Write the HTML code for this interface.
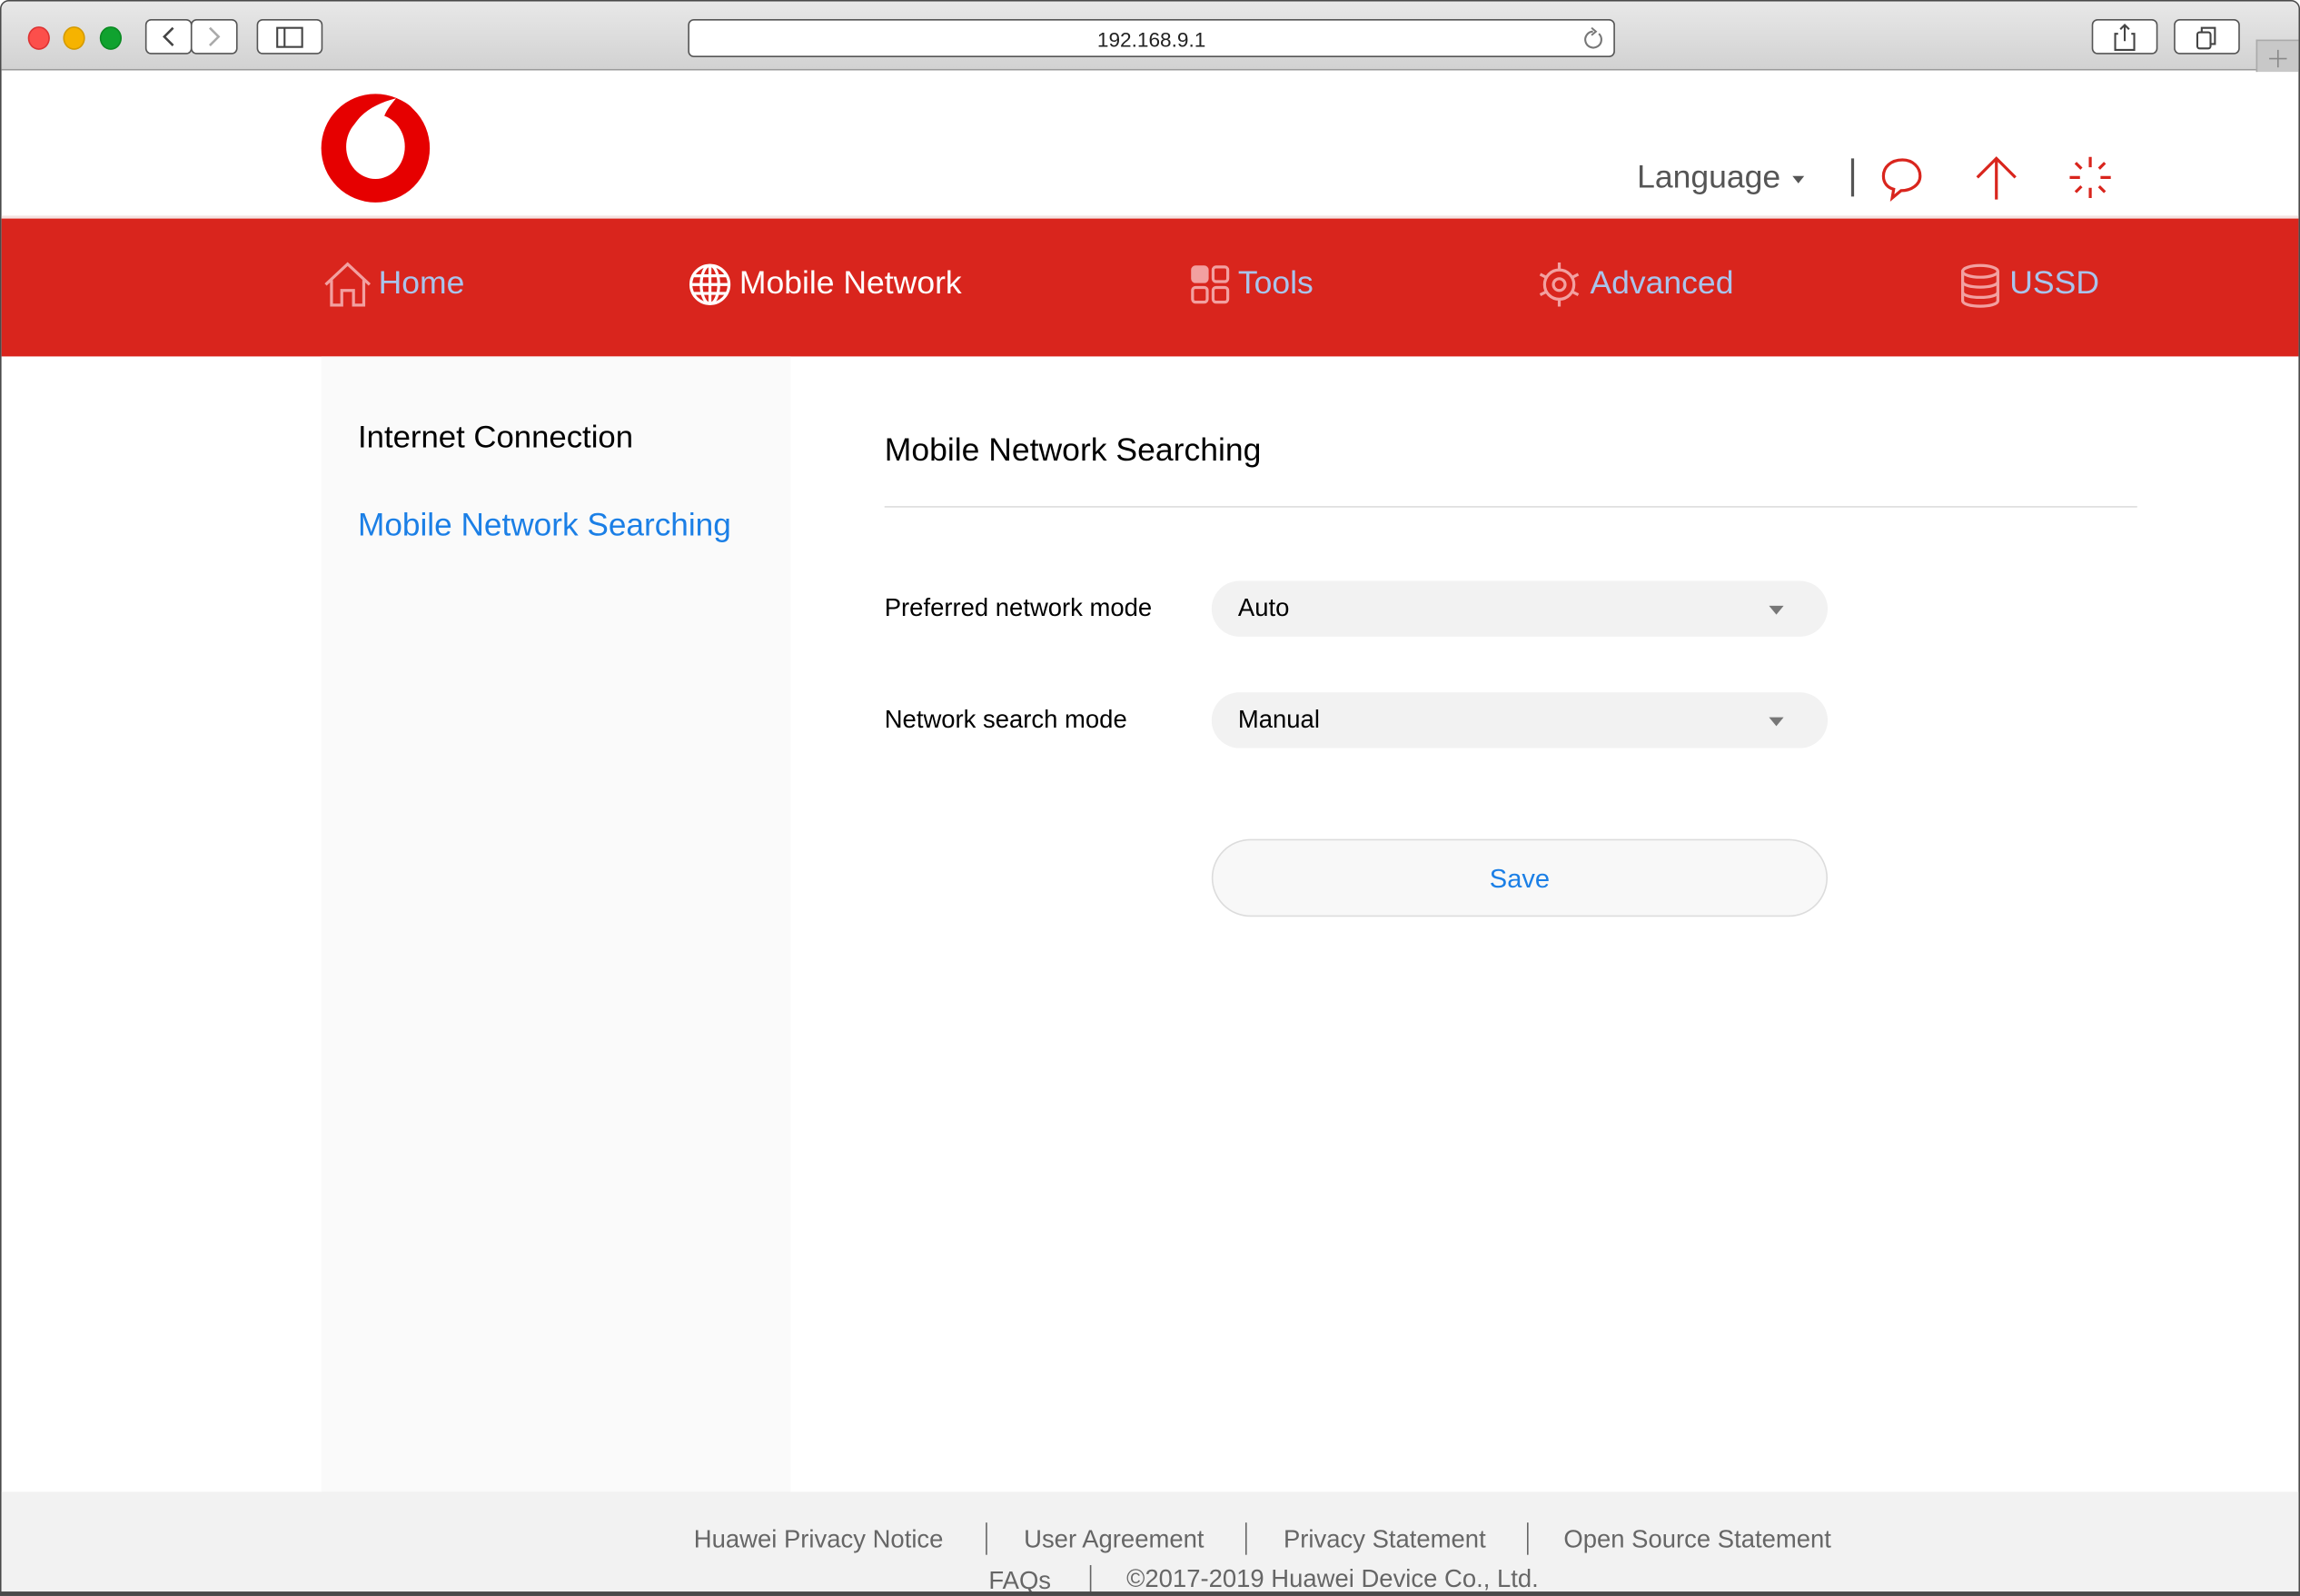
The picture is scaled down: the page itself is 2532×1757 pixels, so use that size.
<!DOCTYPE html>
<html><head><meta charset="utf-8">
<style>
html,body{margin:0;padding:0;width:2532px;height:1756px;overflow:hidden;background:#fff;}
#s{position:absolute;left:0;top:0;width:1568px;height:1088px;transform:scale(1.6148);transform-origin:0 0;font-family:"Liberation Sans",Arial,sans-serif;}
.a{position:absolute;}
.win{left:0;top:0;width:1566px;height:1086px;border:1px solid #4a4a4a;border-radius:6px 6px 0 0;overflow:hidden;background:#fff;}
.tb{left:0;top:0;width:1568px;height:46px;background:linear-gradient(#e8e8e8,#d2d2d2);border-bottom:1px solid #9a9a9a;}
.dot{width:13px;height:14px;border-radius:50%;top:17px;}
.btn{top:12px;height:24px;background:#fff;border:1px solid #555;border-radius:4px;box-sizing:border-box;}
.nav{color:#a9c4ec;font-size:22px;top:179px;}
.lbl{font-size:17px;color:#000;}
.sel{left:825px;width:420px;height:38px;border-radius:19px;background:#f2f2f2;}
.sel span{position:absolute;left:18px;top:9px;font-size:17px;color:#000;}
.sel i{position:absolute;left:380px;top:17px;width:0;height:0;border-left:5px solid transparent;border-right:5px solid transparent;border-top:6px solid #777;}
.ft{font-size:17px;color:#666;}
.vd{width:1px;background:#666;}
</style></head><body>
<div id="s">
<div class="a win">
 <div class="a tb"></div>
 <div class="a dot" style="left:18px;background:#fc4f4b;border:0.5px solid #d33;"></div>
 <div class="a dot" style="left:42px;background:#f6b300;border:0.5px solid #d49a00;"></div>
 <div class="a dot" style="left:67px;background:#10a22f;border:0.5px solid #0a8a22;"></div>
 <div class="a btn" style="left:98px;width:32px;"><svg width="30" height="22" style="position:absolute;left:0;top:0"><path d="M18 5 L12 11 L18 17" stroke="#444" stroke-width="1.6" fill="none"/></svg></div>
 <div class="a btn" style="left:129px;width:32px;"><svg width="30" height="22" style="position:absolute;left:0;top:0"><path d="M12 5 L18 11 L12 17" stroke="#aaa" stroke-width="1.6" fill="none"/></svg></div>
 <div class="a btn" style="left:174px;width:45px;"><svg width="43" height="22" style="position:absolute;left:0;top:0"><rect x="13" y="5" width="17" height="13" stroke="#444" stroke-width="1.3" fill="none"/><line x1="18" y1="5" x2="18" y2="18" stroke="#444" stroke-width="1.3"/></svg></div>
 <div class="a btn" style="left:468px;width:632px;height:26px;"><div class="a" style="left:0;width:630px;top:5px;text-align:center;font-size:14px;color:#222;">192.168.9.1</div>
  <svg width="20" height="22" style="position:absolute;left:606px;top:1px"><path d="M14 8 A5.5 5.5 0 1 1 10 6.5" stroke="#777" stroke-width="1.3" fill="none"/><path d="M9 4 L12 6.5 L9 9" stroke="#777" stroke-width="1.2" fill="none"/></svg></div>
 <div class="a btn" style="left:1425px;width:45px;"><svg width="43" height="22" style="position:absolute;left:0;top:0"><path d="M17 9 H15 V20 H28 V9 H26" stroke="#444" stroke-width="1.3" fill="none"/><path d="M21.5 14 V3 M18.5 6 L21.5 3 L24.5 6" stroke="#444" stroke-width="1.3" fill="none"/></svg></div>
 <div class="a btn" style="left:1481px;width:45px;"><svg width="43" height="22" style="position:absolute;left:0;top:0"><rect x="15" y="8" width="9" height="11" rx="1.5" stroke="#444" stroke-width="1.3" fill="none"/><path d="M18 8 V5 H27 V16 H24" stroke="#444" stroke-width="1.3" fill="none"/></svg></div>
 <div class="a" style="left:1537px;top:26px;width:31px;height:21px;background:#c8c8c8;border-left:1px solid #aaa;border-top:1px solid #aaa;"><svg width="30" height="20"><path d="M14 6 V18 M8 12 H20" stroke="#888" stroke-width="1"/></svg></div>

 <!-- logo -->
 <svg class="a" style="left:217px;top:62px" width="76" height="76" viewBox="0 0 76 76"><circle cx="38" cy="38" r="37" fill="#e60000"/><ellipse cx="38" cy="37" rx="20" ry="22" fill="#fff"/><path d="M20 30 C24 16 36 8 52 4 C47 10 44 14 43 20 C43 23 44 25 46 26 L38 28 Z" fill="#fff"/><path d="M52 4 C58 6 62 9 64 12 L52 12 Z" fill="#e60000"/></svg>

 <div class="a" style="left:1115px;top:107px;font-size:22px;color:#555;">Language</div>
 <div class="a" style="left:1221px;top:119px;border-left:4px solid transparent;border-right:4px solid transparent;border-top:5px solid #555;"></div>
 <div class="a" style="left:1261px;top:107px;width:2px;height:26px;background:#555;"></div>
 <svg class="a" style="left:1280px;top:105px" width="32" height="32"><path d="M16 3 C8 3 3 8 3 14 C3 19 6 22 10 23 L9 29 L15 24 C22 24 28 20 28 14 C28 8 23 3 16 3 Z" stroke="#d9251d" stroke-width="2" fill="none"/></svg>
 <svg class="a" style="left:1343px;top:104px" width="34" height="32"><path d="M17 31 V3 M4 16 L17 3 L30 16" stroke="#d9251d" stroke-width="2" fill="none"/></svg>
 <svg class="a" style="left:1408px;top:104px" width="32" height="32" stroke="#d9251d" stroke-width="2"><path d="M16 2 V9 M16 23 V30 M2 16 H9 M23 16 H30 M6 6 L10 10 M22 22 L26 26 M26 6 L22 10 M10 22 L6 26"/></svg>

 <!-- nav -->
 <div class="a" style="left:0;top:146px;width:1568px;height:2px;background:#f3e3e2;"></div>
 <div class="a" style="left:0;top:148px;width:1568px;height:94px;background:#d9251d;"></div>
 <svg class="a" style="left:219px;top:177px" width="34" height="32" stroke="#f2a0a0" stroke-width="2" fill="none"><path d="M2 16 L17 2 L32 16 M6 13 V30 H13 V20 H21 V30 H28 V13"/></svg>
 <div class="a nav" style="left:257px;">Home</div>
 <svg class="a" style="left:468px;top:178px" width="30" height="30" stroke="#fff" stroke-width="2" fill="none"><circle cx="15" cy="15" r="13"/><ellipse cx="15" cy="15" rx="6" ry="13"/><path d="M2 15 H28 M4 9 H26 M4 21 H26 M15 2 V28"/></svg>
 <div class="a nav" style="left:503px;color:#fff;">Mobile Network</div>
 <svg class="a" style="left:810px;top:179px" width="28" height="28" stroke="#f2a0a0" stroke-width="2" fill="none"><rect x="2" y="2" width="10" height="10" rx="2" fill="#f2a0a0"/><rect x="16" y="2" width="10" height="10" rx="2"/><rect x="2" y="16" width="10" height="10" rx="2"/><rect x="16" y="16" width="10" height="10" rx="2"/></svg>
 <div class="a nav" style="left:843px;">Tools</div>
 <svg class="a" style="left:1046px;top:176px" width="32" height="34" stroke="#f2a0a0" stroke-width="2" fill="none"><circle cx="16" cy="17" r="10"/><circle cx="16" cy="17" r="4"/><path d="M16 2 V7 M16 27 V32 M3 10 L7 12 M25 22 L29 24 M3 24 L7 22 M25 12 L29 10"/></svg>
 <div class="a nav" style="left:1083px;">Advanced</div>
 <svg class="a" style="left:1334px;top:178px" width="30" height="32" stroke="#f2a0a0" stroke-width="2" fill="none"><ellipse cx="15" cy="6" rx="12" ry="4"/><path d="M3 6 V26 C3 31 27 31 27 26 V6 M3 13 C3 18 27 18 27 13 M3 20 C3 25 27 25 27 20"/></svg>
 <div class="a nav" style="left:1369px;">USSD</div>

 <!-- sidebar -->
 <div class="a" style="left:218px;top:242px;width:320px;height:774px;background:#fafafa;"></div>
 <div class="a" style="left:243px;top:285px;font-size:21.5px;color:#000;">Internet Connection</div>
 <div class="a" style="left:243px;top:344px;font-size:21.8px;color:#1b7fe6;">Mobile Network Searching</div>

 <!-- content -->
 <div class="a" style="left:602px;top:293px;font-size:22px;color:#000;">Mobile Network Searching</div>
 <div class="a" style="left:602px;top:344px;width:854px;height:1px;background:#dcdcdc;"></div>
 <div class="a lbl" style="left:602px;top:404px;">Preferred network mode</div>
 <div class="a sel" style="top:395px;"><span>Auto</span><i></i></div>
 <div class="a lbl" style="left:602px;top:480px;">Network search mode</div>
 <div class="a sel" style="top:471px;"><span>Manual</span><i></i></div>
 <div class="a" style="left:825px;top:571px;width:420px;height:53px;box-sizing:border-box;border:1px solid #dcdcdc;border-radius:27px;background:#f8f8f8;"><div class="a" style="left:0;width:418px;top:16px;text-align:center;font-size:18px;color:#1b7fe6;">Save</div></div>

 <!-- footer -->
 <div class="a" style="left:0;top:1016px;width:1568px;height:72px;background:#f2f2f2;"></div>
 <div class="a ft" style="left:472px;top:1039px;">Huawei Privacy Notice</div>
 <div class="a vd" style="left:671px;top:1037px;height:22px;"></div>
 <div class="a ft" style="left:697px;top:1039px;">User Agreement</div>
 <div class="a vd" style="left:848px;top:1037px;height:22px;"></div>
 <div class="a ft" style="left:874px;top:1039px;">Privacy Statement</div>
 <div class="a vd" style="left:1040px;top:1037px;height:22px;"></div>
 <div class="a ft" style="left:1065px;top:1039px;">Open Source Statement</div>
 <div class="a ft" style="left:673px;top:1067px;">FAQs</div>
 <div class="a vd" style="left:742px;top:1066px;height:20px;"></div>
 <div class="a ft" style="left:767px;top:1066px;">©2017-2019 Huawei Device Co., Ltd.</div>
</div>
<div class="a" style="left:0;top:1085px;width:1568px;height:3px;background:#4a4a4a;"></div>
</div>
</body></html>
